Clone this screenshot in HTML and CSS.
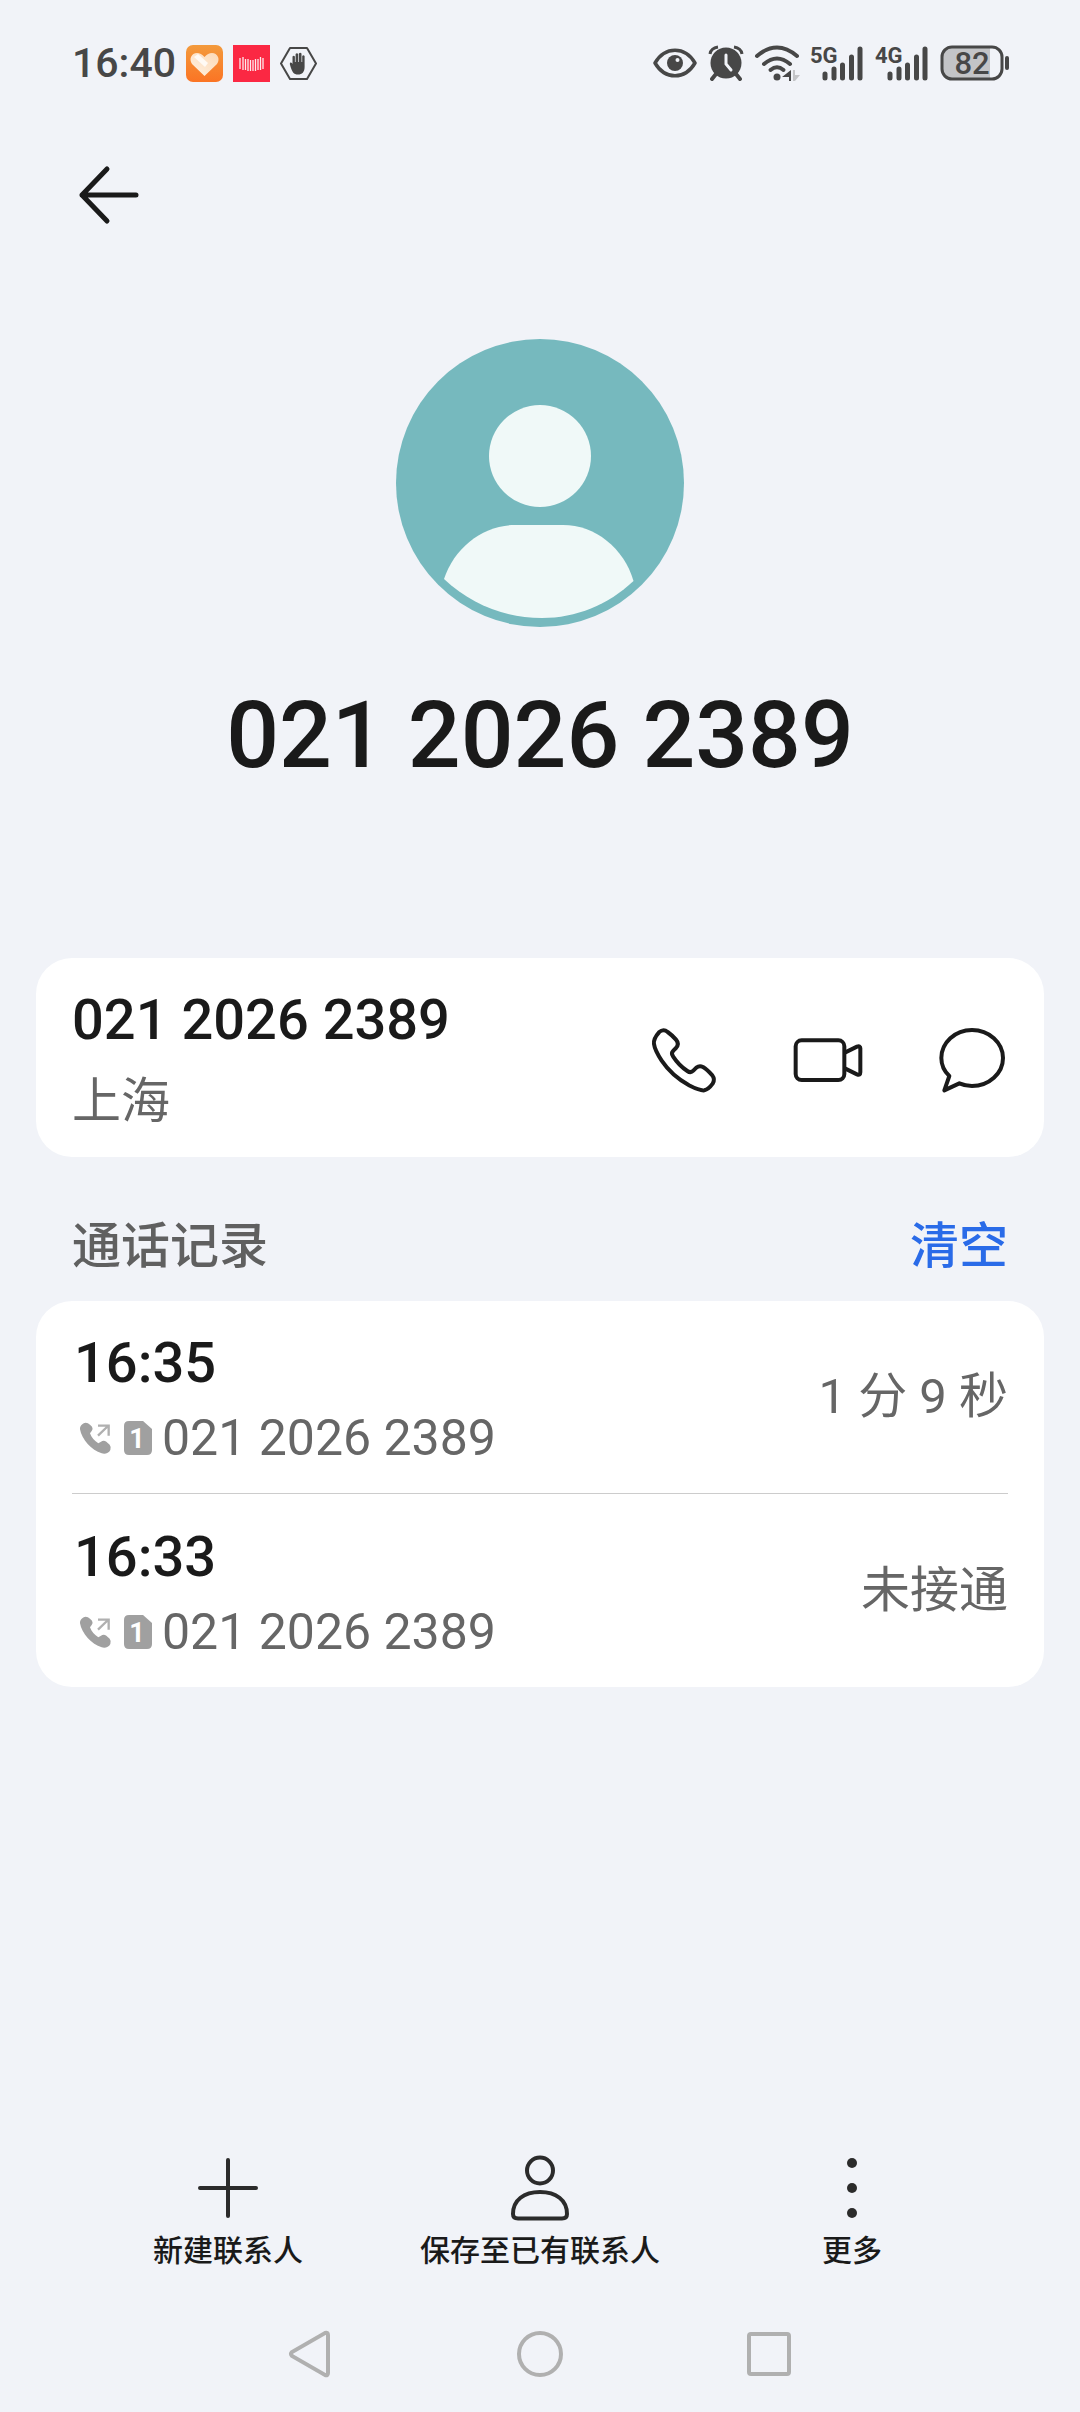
FILE: index.html
```html
<!DOCTYPE html>
<html lang="zh-CN">
<head>
<meta charset="utf-8">
<meta name="viewport" content="width=device-width, initial-scale=1">
<title>021 2026 2389</title>
<link rel="stylesheet" href="styles.css">
</head>
<body>
<div class="status">
  <div class="status-left">
    <time class="clock">16:40</time>
    <svg width="37" height="37" viewBox="0 0 37 37" aria-hidden="true">
      <defs>
        <linearGradient id="orange" x1="0" y1="0" x2="0" y2="1"><stop offset="0" stop-color="#f39a3c"/><stop offset="1" stop-color="#fb7424"/></linearGradient>
        <linearGradient id="heart" x1="1" y1="0" x2="0" y2="1"><stop offset="0" stop-color="#fcd9b6"/><stop offset="1" stop-color="#fff1e2"/></linearGradient>
      </defs>
      <rect width="37" height="37" rx="7" fill="url(#orange)"/>
      <path d="M18.500 31L6 19C2.500 14 5.500 8 11 8q4 0 7.500 4Q22 8 26 8c5.500 0 8.500 6 5 11z" fill="url(#heart)"/>
      <path d="M8 12l4-3 10 9-3 4z" fill="#fff" opacity=".8"/>
    </svg>
    <svg width="37" height="37" viewBox="0 0 37 37" aria-hidden="true">
      <rect width="37" height="37" fill="#fb2843"/>
      <path d="M7 13v11M10 12v13M12.500 14v11M15 14v12M17.500 15v11M20 15v11M22.500 14v12M25 14v11M27.500 12v13M30 13v11" stroke="#fff" stroke-width="1.300" opacity=".9"/>
    </svg>
    <svg width="37" height="37" viewBox="0 0 37 37" aria-hidden="true">
      <path d="M10 3h17l9 15.500-9 15.500H10L1 18.500z" fill="none" stroke="#474747" stroke-width="2" stroke-linejoin="round"/>
      <path d="M12.500 20V11.500q1.200-1.600 2.400 0V17h.7V9q1.300-1.500 2.600 0v8h.7V8.500q1.300-1.500 2.600 0V17h.7v-6q1.200-1.400 2.400 0v11c0 5-2.500 7.500-6.500 7.500-4.500 0-6-2-8.300-10.500.3-2 2-2 3 1z" fill="#474747"/>
    </svg>
  </div>
  <div class="status-right">
    <svg width="44" height="36" viewBox="0 0 44 36" aria-hidden="true">
      <path d="M2 18C12 1 32 1 42 18 32 35 12 35 2 18z" fill="none" stroke="#474747" stroke-width="3.500" stroke-linejoin="round"/>
      <circle cx="22" cy="18" r="8" fill="#474747"/><circle cx="24.500" cy="15" r="2" fill="#f1f3f8"/>
    </svg>
    <svg width="36" height="36" viewBox="0 0 36 36" aria-hidden="true">
      <circle cx="18" cy="18" r="15.500" fill="#474747"/>
      <path d="M2 9Q3 3 10 2M34 9Q33 3 26 2" fill="none" stroke="#474747" stroke-width="3"/>
      <path d="M8 29l-4 5M28 29l4 5" stroke="#474747" stroke-width="4" stroke-linecap="round"/>
      <path d="M18 10v9l5 6" fill="none" stroke="#f1f3f8" stroke-width="3" stroke-linecap="round"/>
    </svg>
    <svg class="wifi" width="44" height="36" viewBox="0 0 44 36" aria-hidden="true">
      <g fill="none" stroke="#474747" stroke-width="4" stroke-linecap="round"><path d="M2 11Q22-6 42 11"/><path d="M9 19Q22 8 35 19"/><path d="M15.500 25Q22 19.500 28.500 25"/></g>
      <circle cx="22" cy="32" r="3.500" fill="#474747"/>
      <path d="M36 25v11h-2v-4h-7z" fill="#474747"/><path d="M38 25h2v5h5l-5 6h-2z" fill="#c4c5c8"/>
    </svg>
    <svg class="signal" width="54" height="37" viewBox="0 0 54 37" role="img" aria-label="5G">
      <text class="net" x="0" y="18">5G</text>
      <path d="M15 33v-4M24 33v-9M32.500 33v-13M41.500 33v-21M50 33V4" stroke="#474747" stroke-width="5" stroke-linecap="round"/>
    </svg>
    <svg class="signal" width="54" height="37" viewBox="0 0 54 37" role="img" aria-label="4G">
      <text class="net" x="0" y="18">4G</text>
      <path d="M15 33v-4M24 33v-9M32.500 33v-13M41.500 33v-21M50 33V4" stroke="#474747" stroke-width="5" stroke-linecap="round"/>
    </svg>
    <svg width="70" height="36" viewBox="0 0 70 36" role="img" aria-label="82%">
      <rect x="3" y="3" width="47" height="30" rx="8" fill="#c3c4c7"/><path d="M42 3h8v30h-8z" fill="#c3c4c7"/>
      <rect x="2" y="2" width="60" height="32" rx="10" fill="none" stroke="#474747" stroke-width="3"/>
      <path d="M67 13v10" stroke="#474747" stroke-width="4" stroke-linecap="round"/>
      <text class="level" x="32" y="29" text-anchor="middle">82</text>
    </svg>
  </div>
</div>

<header class="bar">
  <button class="icon-btn" aria-label="返回">
    <svg width="72" height="72" viewBox="0 0 72 72"><path d="M35 10L10 36l25 26M10 36h54" class="back"/></svg>
  </button>
</header>

<main class="content">
  <section class="profile">
    <svg class="avatar" viewBox="0 0 288 288" aria-hidden="true">
      <circle cx="144" cy="144" r="144" fill="#76b9be"/>
      <circle cx="144" cy="117" r="51" fill="#f0f9f8"/>
      <path d="M48 240C58 209 87 186 119 186h48c32 0 61 23 70.500 56C212 266 180 279 146 279 108 279 75 265 48 240z" fill="#f0f9f8"/>
    </svg>
    <h1 class="title">021 2026 2389</h1>
  </section>

  <section class="card contact">
    <div class="contact-text">
      <div class="primary">021 2026 2389</div>
      <div class="secondary">上海</div>
    </div>
    <div class="actions">
      <button class="icon-btn" aria-label="拨打电话">
        <svg class="line" width="72" height="72" viewBox="84 212 216 216"><path d="M102 272C100 258 108 247 117 237Q130 225 143 236 157 246 168 259 179 272 168 284L160 292Q152 300 159 309C170 326 184 341 202 353Q212 360 220 352L229 343Q238 336 249 341C259 347 268 356 277 366Q286 378 278 391C270 402 263 409 253 411 240 413 225 405 207 396 175 378 145 352 125 322 112 302 104 288 102 272z"/></svg>
      </button>
      <button class="icon-btn" aria-label="视频通话">
        <svg class="line" width="72" height="72" viewBox="516 212 216 216"><rect x="527" y="261" width="146" height="119" rx="18"/><path d="M676 297l35-17q10-4 10 5v72q0 10-10 6l-35-17"/></svg>
      </button>
      <button class="icon-btn" aria-label="发送信息">
        <svg class="line" width="72" height="72" viewBox="948 212 216 216"><path d="M988 368C972 353 964 335 964 314c0-46 41-84 92-84s93 38 93 84-42 84-93 84q-20 0-38-8l-45 21z"/></svg>
      </button>
    </div>
  </section>

  <div class="section-head">
    <h2 class="section-title">通话记录</h2>
    <button class="clear">清空</button>
  </div>

  <ul class="card log">
    <li class="row">
      <div class="row-main">
        <time class="primary">16:35</time>
        <div class="row-number">
          <svg width="36" height="36" viewBox="147 387 108 108" role="img" aria-label="呼出"><path fill="#a0a0a0" d="M153 415C152 405 160 397 170 395Q177 395 183 401L189 407Q193 413 188 420L183 427C187 440 197 450 208 457L216 452Q224 447 232 452L242 461Q248 469 244 477C239 487 228 490 218 487 188 478 158 445 153 415z"/><path d="M207 434l30-29M207 404h32v30" fill="none" stroke="#b0b0b0" stroke-width="7"/></svg>
          <svg width="28" height="34" viewBox="0 0 28 34" role="img" aria-label="卡1"><path fill="#a0a0a0" d="M5 0h14l9 8v21q0 5-5 5H5q-5 0-5-5V5q0-5 5-5z"/><text class="sim" x="13" y="27" text-anchor="middle">1</text></svg>
          <span>021 2026 2389</span>
        </div>
      </div>
      <span class="secondary">1 分 9 秒</span>
    </li>
    <li class="row">
      <div class="row-main">
        <time class="primary">16:33</time>
        <div class="row-number">
          <svg width="36" height="36" viewBox="147 387 108 108" role="img" aria-label="呼出"><path fill="#a0a0a0" d="M153 415C152 405 160 397 170 395Q177 395 183 401L189 407Q193 413 188 420L183 427C187 440 197 450 208 457L216 452Q224 447 232 452L242 461Q248 469 244 477C239 487 228 490 218 487 188 478 158 445 153 415z"/><path d="M207 434l30-29M207 404h32v30" fill="none" stroke="#b0b0b0" stroke-width="7"/></svg>
          <svg width="28" height="34" viewBox="0 0 28 34" role="img" aria-label="卡1"><path fill="#a0a0a0" d="M5 0h14l9 8v21q0 5-5 5H5q-5 0-5-5V5q0-5 5-5z"/><text class="sim" x="13" y="27" text-anchor="middle">1</text></svg>
          <span>021 2026 2389</span>
        </div>
      </div>
      <span class="secondary">未接通</span>
    </li>
  </ul>
</main>

<footer class="toolbar">
  <button class="tool">
    <svg class="tool-icon" width="72" height="72" viewBox="0 0 72 72"><path d="M36 8v56M8 36h56"/></svg>
    新建联系人
  </button>
  <button class="tool">
    <svg class="tool-icon" width="72" height="72" viewBox="0 0 72 72"><circle cx="36" cy="18.500" r="13"/><path d="M36 40C20 40 9 48 9 62q0 4.500 5 4.500h44q5 0 5-4.500C63 48 52 40 36 40z"/></svg>
    保存至已有联系人
  </button>
  <button class="tool">
    <svg width="72" height="72" viewBox="0 0 72 72" fill="#2b2b2b"><circle cx="36" cy="11" r="5"/><circle cx="36" cy="36" r="5"/><circle cx="36" cy="61" r="5"/></svg>
    更多
  </button>
</footer>

<nav class="sysnav">
  <button class="icon-btn" aria-label="返回键"><svg class="key" width="60" height="60" viewBox="0 0 60 60"><path d="M45 9q3-1 3 2v38q0 3-3 2L12 32q-2-2 0-4z"/></svg></button>
  <button class="icon-btn" aria-label="主屏幕"><svg class="key" width="60" height="60" viewBox="0 0 60 60"><circle cx="30" cy="30" r="21"/></svg></button>
  <button class="icon-btn" aria-label="最近任务"><svg class="key" width="60" height="60" viewBox="0 0 60 60"><rect x="9" y="10" width="40" height="40" rx="2"/></svg></button>
</nav>
</body>
</html>
```
FILE: styles.css
```css
* {
  box-sizing: border-box;
}

body {
  margin: 0;
  min-height: 100vh;
  display: flex;
  flex-direction: column;
  background: #f1f3f8;
  color: #1a1a1a;
  font-family: Roboto, "Noto Sans CJK SC", sans-serif;
}

svg {
  display: block;
  flex: none;
}

button {
  margin: 0;
  padding: 0;
  border: 0;
  background: none;
  color: inherit;
  font: inherit;
}

h1,
h2,
ul {
  margin: 0;
  padding: 0;
}

.icon-btn {
  display: flex;
}

/* Status bar */
.status {
  display: flex;
  align-items: center;
  justify-content: space-between;
  height: 126px;
  padding: 0 70px 0 72px;
}

.status-left {
  display: flex;
  align-items: center;
  gap: 10px;
}

.status-right {
  display: flex;
  align-items: center;
  gap: 11px;
}

.clock {
  color: #474747;
  font-size: 41px;
  font-weight: 500;
  line-height: 48px;
}

.wifi,
.signal {
  overflow: visible;
}

.net {
  fill: #474747;
  font-size: 22px;
  font-weight: 700;
}

.level {
  fill: #474747;
  font-size: 31px;
  font-weight: 500;
}

/* Title bar */
.bar {
  display: flex;
  padding: 33px 72px 0;
}

.back {
  fill: none;
  stroke: #1a1a1a;
  stroke-width: 5;
  stroke-linecap: round;
  stroke-linejoin: round;
}

.content {
  padding: 108px 36px 0;
}

/* Profile */
.profile {
  display: flex;
  flex-direction: column;
  align-items: center;
  gap: 53px;
  margin-bottom: 166px;
}

.avatar {
  width: 288px;
  height: 288px;
}

.title {
  font-size: 93px;
  font-weight: 500;
  line-height: 112px;
}

/* Cards */
.card {
  border-radius: 36px;
  background: #fff;
}

.primary {
  font-size: 56px;
  font-weight: 500;
  line-height: 76px;
}

.secondary {
  color: #666;
  font-size: 49px;
  line-height: 72px;
}

.contact {
  display: flex;
  align-items: center;
  justify-content: space-between;
  padding: 24px 36px 19px;
}

.contact-text {
  display: flex;
  flex-direction: column;
  gap: 8px;
}

.actions {
  display: flex;
  gap: 72px;
}

.line {
  fill: none;
  stroke: #1a1a1a;
  stroke-width: 12;
  stroke-linecap: round;
  stroke-linejoin: round;
}

.section-head {
  display: flex;
  align-items: center;
  justify-content: space-between;
  padding: 53px 36px 17px;
  font-size: 49px;
  line-height: 74px;
}

.section-title {
  color: #606060;
  font-size: 49px;
  font-weight: 500;
}

.clear {
  color: #2a6be8;
  font-weight: 500;
}

/* Call log */
.log {
  padding: 0 36px;
  list-style: none;
}

.row {
  display: flex;
  align-items: center;
  justify-content: space-between;
  min-height: 192px;
}

.row + .row {
  border-top: 1px solid #ccc;
  min-height: 194px;
}

.row-main {
  display: flex;
  flex-direction: column;
  padding-top: 6px;
}

.row-main .primary {
  padding-left: 2px;
}

.row-number {
  display: flex;
  align-items: center;
  gap: 10px;
  padding-left: 6px;
  color: #666;
  font-size: 50px;
  line-height: 74px;
}

.sim {
  fill: #fff;
  font-size: 27px;
  font-weight: 700;
}

/* Bottom toolbar */
.toolbar {
  display: grid;
  grid-template-columns: repeat(3, 1fr);
  margin-top: auto;
  padding: 0 72px 25px;
}

.tool {
  display: flex;
  flex-direction: column;
  align-items: center;
  gap: 7px;
  font-size: 30px;
  font-weight: 500;
  line-height: 40px;
  white-space: nowrap;
}

.tool-icon {
  fill: none;
  stroke: #2b2b2b;
  stroke-width: 4;
  stroke-linecap: round;
  stroke-linejoin: round;
}

/* System navigation keys */
.sysnav {
  display: grid;
  grid-template-columns: repeat(3, 1fr);
  justify-items: center;
  padding: 28px 18%;
}

.key {
  fill: none;
  stroke: #b0b0b0;
  stroke-width: 4;
}
```
